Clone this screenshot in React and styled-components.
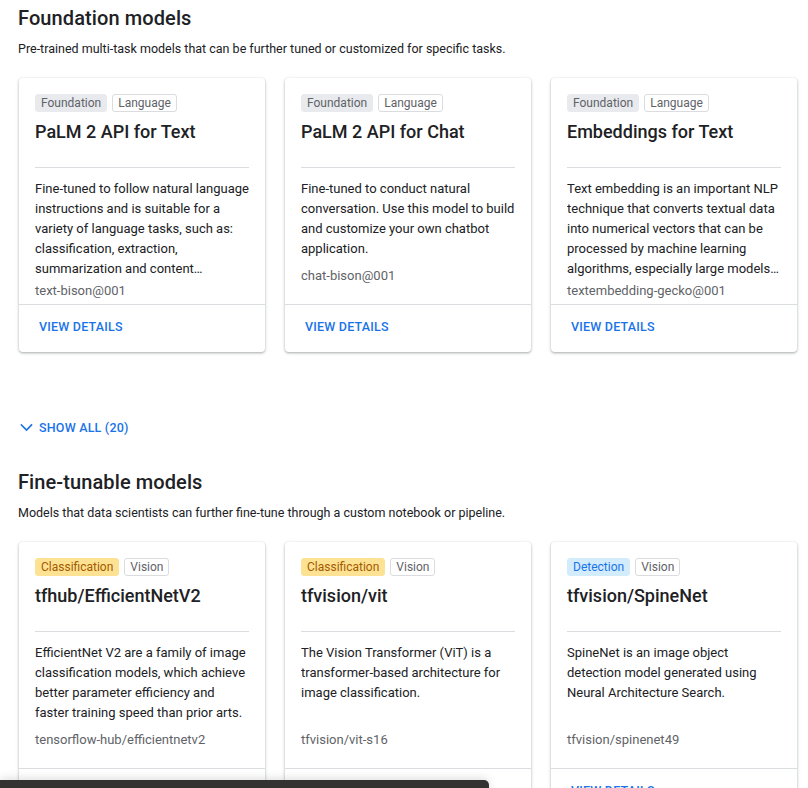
import React from "react";
import styled, { createGlobalStyle } from "styled-components";

const GlobalStyle = createGlobalStyle`
  body {
    margin: 0;
    background: #fff;
    font-family: Roboto, "Liberation Sans", Arial, sans-serif;
    color: #202124;
  }
`;

const Page = styled.div`
  padding: 6px 11px 0 19px;
`;

const Section = styled.section``;

const Heading = styled.h2`
  margin: 0 0 0 -1px;
  font-size: 20px;
  font-weight: 500;
  line-height: 24px;
  letter-spacing: 0.1px;
`;

const Subtitle = styled.p`
  margin: 10px 0 0 -1px;
  font-size: 12.5px;
  line-height: 18px;
`;

const Grid = styled.div`
  display: grid;
  grid-template-columns: repeat(3, 246px);
  gap: 20px;
  margin-top: 20px;
`;

const Card = styled.div`
  display: flex;
  flex-direction: column;
  background: #fff;
  border-radius: 4px;
  box-shadow: 0 1px 2px rgba(60, 64, 67, 0.3), 0 1px 3px 1px rgba(60, 64, 67, 0.12);
`;

const Header = styled.div`
  margin: 0 16px;
  padding-top: 16px;
  height: 73px;
  border-bottom: 1px solid #dadce0;
`;

const Tags = styled.div`
  display: flex;
  gap: 5px;
`;

const tagColors = {
  gray: { bg: "#e8eaed", fg: "#5f6368", bd: "#e8eaed" },
  outline: { bg: "#fff", fg: "#5f6368", bd: "#dadce0" },
  amber: { bg: "#fde293", fg: "#a35a00", bd: "#fde293" },
  blue: { bg: "#d2ecfb", fg: "#1a73e8", bd: "#d2ecfb" },
};

const Tag = styled.span`
  display: inline-flex;
  align-items: center;
  height: 16px;
  padding: 0 5px;
  border-radius: 3px;
  font-size: 12px;
  font-weight: 400;
  background: ${(p) => tagColors[p.$kind].bg};
  color: ${(p) => tagColors[p.$kind].fg};
  border: 1px solid ${(p) => tagColors[p.$kind].bd};
`;

const Title = styled.h3`
  margin: 8px 0 0;
  font-size: 18px;
  font-weight: 500;
  line-height: 24px;
  color: #202124;
`;

const Body = styled.div`
  display: flex;
  flex-direction: column;
  height: 136px;
  padding: 11px 16px 20px;
  box-sizing: border-box;
`;

const Desc = styled.p`
  flex-shrink: 0;
  margin: 0;
  font-size: 13px;
  line-height: 20px;
  color: #202124;
  display: -webkit-box;
  -webkit-line-clamp: 5;
  -webkit-box-orient: vertical;
  overflow: hidden;
`;

const ModelId = styled.div`
  flex-shrink: 0;
  margin-top: auto;
  padding-top: 4px;
  font-size: 13px;
  line-height: 16px;
  color: #5f6368;
`;

const Footer = styled.div`
  display: flex;
  align-items: center;
  box-sizing: border-box;
  height: 48px;
  padding: 0 20px 4px;
  border-top: 1px solid #dadce0;
`;

const LinkButton = styled.a`
  display: inline-flex;
  align-items: center;
  gap: 5px;
  font-size: 12.5px;
  font-weight: 500;
  letter-spacing: 0.2px;
  color: #1a73e8;
  text-decoration: none;
  cursor: pointer;
`;

const ShowAll = styled.div`
  margin: 65px 0 33px 0;
  height: 20px;
  display: flex;
  align-items: center;
`;

const Snackbar = styled.div`
  position: fixed;
  left: 0;
  bottom: -40px;
  width: 489px;
  height: 48px;
  background: #323232;
  border-radius: 0 5px 0 0;
  box-shadow: 0 -2px 8px rgba(0, 0, 0, 0.12);
`;

const foundation = [
  {
    title: "PaLM 2 API for Text",
    tags: [["Foundation", "gray"], ["Language", "outline"]],
    desc: "Fine-tuned to follow natural language instructions and is suitable for a variety of language tasks, such as: classification, extraction, summarization and content generation.",
    id: "text-bison@001",
  },
  {
    title: "PaLM 2 API for Chat",
    tags: [["Foundation", "gray"], ["Language", "outline"]],
    desc: "Fine-tuned to conduct natural conversation. Use this model to build and customize your own chatbot application.",
    id: "chat-bison@001",
  },
  {
    title: "Embeddings for Text",
    tags: [["Foundation", "gray"], ["Language", "outline"]],
    desc: "Text embedding is an important NLP technique that converts textual data into numerical vectors that can be processed by machine learning algorithms, especially large models (LLMs).",
    id: "textembedding-gecko@001",
  },
];

const finetunable = [
  {
    title: "tfhub/EfficientNetV2",
    tags: [["Classification", "amber"], ["Vision", "outline"]],
    desc: "EfficientNet V2 are a family of image classification models, which achieve better parameter efficiency and faster training speed than prior arts.",
    id: "tensorflow-hub/efficientnetv2",
  },
  {
    title: "tfvision/vit",
    tags: [["Classification", "amber"], ["Vision", "outline"]],
    desc: "The Vision Transformer (ViT) is a transformer-based architecture for image classification.",
    id: "tfvision/vit-s16",
  },
  {
    title: "tfvision/SpineNet",
    tags: [["Detection", "blue"], ["Vision", "outline"]],
    desc: "SpineNet is an image object detection model generated using Neural Architecture Search.",
    id: "tfvision/spinenet49",
  },
];

function ModelCard({ model }) {
  return (
    <Card>
      <Header>
        <Tags>
          {model.tags.map(([label, kind]) => (
            <Tag key={label} $kind={kind}>
              {label}
            </Tag>
          ))}
        </Tags>
        <Title>{model.title}</Title>
      </Header>
      <Body>
        <Desc>{model.desc}</Desc>
        <ModelId>{model.id}</ModelId>
      </Body>
      <Footer>
        <LinkButton>VIEW DETAILS</LinkButton>
      </Footer>
    </Card>
  );
}

function Chevron() {
  return (
    <svg width="15" height="15" viewBox="0 0 24 24" fill="none">
      <path d="M4 8l8 8 8-8" stroke="#1a73e8" strokeWidth="2.6" strokeLinecap="square" />
    </svg>
  );
}

export default function App() {
  return (
    <>
      <GlobalStyle />
      <Page>
        <Section>
          <Heading>Foundation models</Heading>
          <Subtitle>
            Pre-trained multi-task models that can be further tuned or customized for specific tasks.
          </Subtitle>
          <Grid>
            {foundation.map((m) => (
              <ModelCard key={m.id} model={m} />
            ))}
          </Grid>
        </Section>
        <ShowAll>
          <LinkButton>
            <Chevron />
            SHOW ALL (20)
          </LinkButton>
        </ShowAll>
        <Section>
          <Heading>Fine-tunable models</Heading>
          <Subtitle>
            Models that data scientists can further fine-tune through a custom notebook or pipeline.
          </Subtitle>
          <Grid>
            {finetunable.map((m) => (
              <ModelCard key={m.id} model={m} />
            ))}
          </Grid>
        </Section>
      </Page>
      <Snackbar />
    </>
  );
}
